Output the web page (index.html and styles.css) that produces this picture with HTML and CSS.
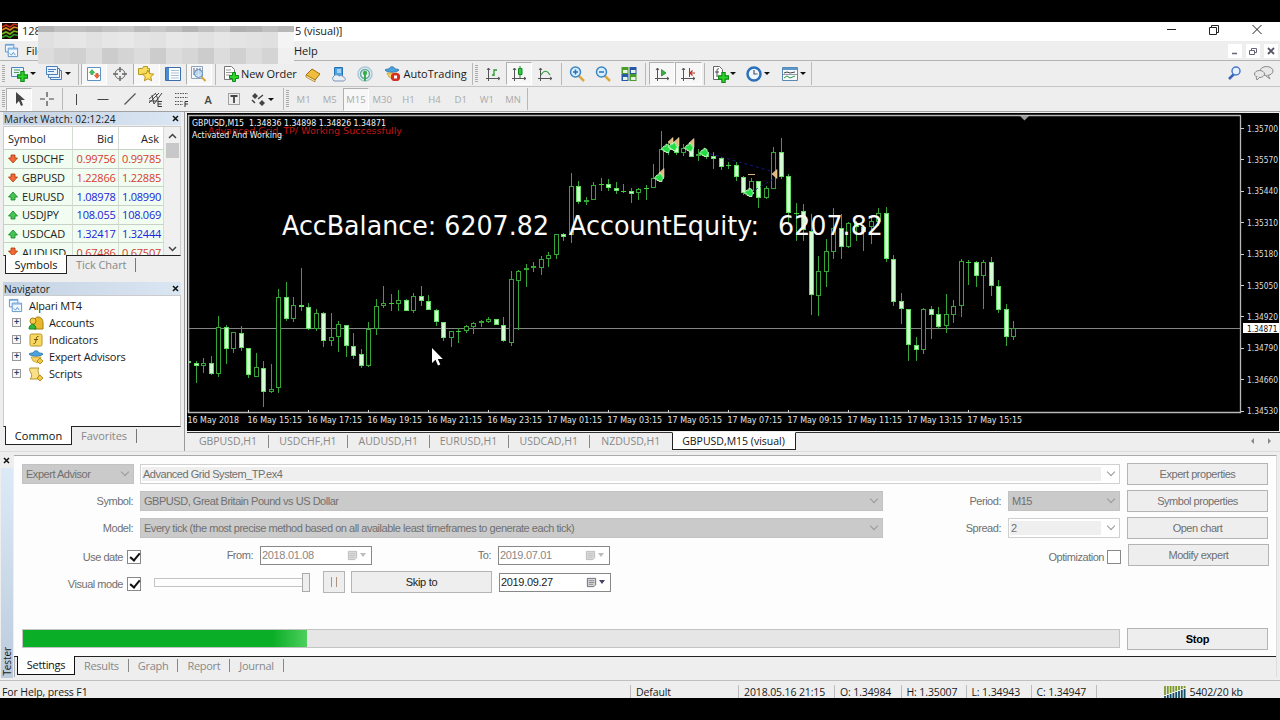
FILE: index.html
```html
<!DOCTYPE html>
<html lang="en">
<head>
<meta charset="utf-8">
<title>MT4 Strategy Tester</title>
<link rel="stylesheet" href="styles.css">
</head>
<body>
<svg width="0" height="0" class="defs">
  <symbol id="plus" viewBox="0 0 10 10"><path d="M3.5.5h3v3h3v3h-3v3h-3v-3h-3v-3h3z" fill="#2ed32e" stroke="#0c8a12"/></symbol>
  <symbol id="axes" viewBox="0 0 18 18"><path d="M4.500 3v13M2 13.500h14M3 5l1.500-2L6 5M14 12l2 1.500L14 15" fill="none" stroke="#555"/></symbol>
  <symbol id="windows" viewBox="0 0 16 16"><g fill="#eef6ff" stroke="#5c93c8"><path d="M1.500 1.500h9v8h-9z"/><path d="M4.500 5.500h10v9h-10z"/></g><path d="M2 2.500h8M5 6.500h9" stroke="#7db2e4"/><path d="M6 11l2 2 2-3 2 3" fill="none" stroke="#5c93c8"/></symbol>
  <symbol id="hat" viewBox="0 0 16 16"><path d="M1 5c2 3 12 3 14 0-1-1-3-1-4-1-1-3-5-3-6 0-1 0-3 0-4 1z" fill="#4aa3dc" stroke="#2570a8" stroke-width=".8"/><path d="M3 8h10l-3 6-5-2z" fill="#f3d26a" stroke="#c89a2a" stroke-width=".8"/></symbol>
  <symbol id="down" viewBox="0 0 10 10"><path d="M3 1h4v3h2.500L5 9 .5 4H3z" fill="#f0693a" stroke="#b03408" stroke-width=".8"/></symbol>
  <symbol id="up" viewBox="0 0 10 10"><path d="M3 9h4V6h2.500L5 1 .5 6H3z" fill="#45c653" stroke="#148022" stroke-width=".8"/></symbol>
  <symbol id="cal" viewBox="0 0 12 12"><path d="M1.500 1.500h9v7l-2 2h-7z" fill="#d8d8d8" stroke="currentColor"/><path d="M3 4h6M3 6h6M3 8h5" stroke="currentColor" stroke-width=".7"/></symbol>
</svg>
<div class="screen">
  <header class="titlebar">
    <svg class="logo" width="16" height="16" viewBox="0 0 16 16"><path d="M0 0h16v16H0z" fill="#180c04"/><g fill="none" stroke-width="1.600"><path d="M0 4l4-2 4 2 4-3 4 1" stroke="#c92a18"/><path d="M0 7l4-2 4 2 4-3 4 1" stroke="#d88a20"/><path d="M0 11l4-2 4 2 4-3 4 1" stroke="#7ab51e"/><path d="M0 14.500l4-2 4 2 4-3 4 1" stroke="#2e9a22"/></g></svg>
    <span class="title-a">128</span><span class="title-b">5 (visual)]</span>
    <svg class="winbtns" width="100" height="18" viewBox="0 0 100 18" fill="none" stroke="#222"><path d="M1 7.500h9"/><path d="M43.500 5.500h7v7h-7zM45.500 5.500v-2h7v7h-2"/><path d="M86.500 3l9 9M95.500 3l-9 9"/></svg>
  </header>
  <nav class="menubar">
    <svg width="15" height="15"><use href="#windows"/></svg>
    <span class="menu-file">File</span><span class="menu-help">Help</span>
    <div class="mdi"><i><svg width="10" height="10"><path d="M2 7.500h5" stroke="#667" stroke-width="1.500"/></svg></i><i><svg width="10" height="10" fill="none" stroke="#667"><path d="M1.500 4.500h5v4h-5zM3.500 4V2.500h5v4H7"/></svg></i><i><svg width="10" height="10"><path d="M2 2l6 6M8 2l-6 6" stroke="#556" stroke-width="1.800"/></svg></i></div>
  </nav>
  <div class="mosaic" id="mosaic"></div>

  <div class="toolbar main-tools">
    <b class="grip"></b>
    <span class="tb dd w34"><svg width="20" height="18"><path d="M2.500 2.500h12v9h-12z" fill="#e8f3ff" stroke="#4a86c0"/><path d="M5 5h6M5 7.500h5" stroke="#4c9c50"/><use href="#plus" x="8" y="6" width="11" height="11"/></svg><em></em></span>
    <span class="tb dd w36 prof"><svg width="18" height="18" fill="#e8f3ff" stroke="#4a80ba"><path d="M5.500 5.500h11v9h-11z"/><path d="M3.500 3.500h11v9h-11z"/><path d="M1.500 1.500h11v8h-11z"/><path d="M3 4.500h8M3 6.500h6"/></svg><em></em></span>
    <b class="sep s5"></b>
    <span class="tb on"><svg width="16" height="16"><path d="M1.500 1.500h13v13h-13z" fill="#fff" stroke="#5c93c8"/><use href="#up" x="3" y="3" width="6" height="6"/><use href="#down" x="8" y="7" width="6" height="6"/></svg></span>
    <span class="tb"><svg width="16" height="16" fill="none" stroke="#666"><circle cx="8" cy="8" r="5"/><path d="M8 1v5M8 10v5M1 8h5M10 8h5" stroke-width="1.500"/></svg></span>
    <span class="tb on"><svg width="18" height="18"><path d="M1.500 3.500h4l1-2h4v2h2v6h-11z" fill="#f6dc5e" stroke="#b99722"/><path d="M11 5l1.700 3.700 4 .4-3 2.700.9 4L11 13.700l-3.600 2.100.9-4-3-2.700 4-.4z" fill="#ffe25a" stroke="#b9901a"/></svg></span>
    <span class="tb"><svg width="16" height="16"><path d="M.5 1.500h15v13H.5z" fill="#fff" stroke="#3b6ea8"/><path d="M1 2h3v12H1z" fill="#4b8cd0"/><path d="M6 4.500h8M6 7h8M6 9.500h8M6 12h8" stroke="#a9bfd8"/></svg></span>
    <span class="tb on"><svg width="17" height="17"><path d="M1.500 1.500h11v12h-11z" fill="#f4f8fc" stroke="#8aa4be"/><path d="M4 3v7M7 3v7M10 3v6" stroke="#668"/><circle cx="8.500" cy="8.500" r="4" fill="#bfe0f8" fill-opacity=".7" stroke="#5a8ab8"/><path d="M11.500 12l4 4" stroke="#d8a838" stroke-width="2"/></svg></span>
    <b class="sep s8"></b>
    <span class="tb order"><svg width="18" height="18"><path d="M1.500 1.500h7l3 3v10h-10z" fill="#fff" stroke="#777"/><path d="M3 5h5M3 7.500h6M3 10h4" stroke="#999"/><use href="#plus" x="6" y="7" width="10" height="10"/></svg>New Order</span>
    <span class="tb"><svg width="16" height="16"><path d="M1 9l6-6 8 5-5 6z" fill="#eebd3e" stroke="#a06c10"/><path d="M1 9v2l9 5v-2z" fill="#fff0b8" stroke="#a06c10" stroke-width=".7"/></svg></span>
    <span class="tb"><svg width="16" height="16"><path d="M3.500 1.500h8v8h-8z" fill="#4da2e4" stroke="#2570b0"/><path d="M6 4h4M6 6h4" stroke="#fff"/><path d="M3 15a3 3 0 010-5c2-2 4-1 5 0 2-1 4 0 4 1 3 0 3 4 0 4z" fill="#e6eef6" stroke="#7c95b4"/></svg></span>
    <span class="tb"><svg width="16" height="16" fill="none"><circle cx="8" cy="8" r="7" stroke="#a8c8d8" stroke-width="1.500"/><circle cx="8" cy="8" r="4.500" stroke="#64a8a8" stroke-width="1.500"/><circle cx="8" cy="7" r="2.200" fill="#35b04a"/><path d="M8 8v7" stroke="#35b04a" stroke-width="2"/></svg></span>
    <span class="tb auto"><svg width="17" height="17"><use href="#hat" width="16" height="16"/><path d="M9 8h5l2 2v4l-2 2H9l-2-2v-4z" fill="#d83020"/><path d="M10 10.500h3v3h-3z" fill="#fff"/></svg>AutoTrading</span>
    <b class="sep s3"></b><b class="grip g2"></b>
    <span class="tb"><svg width="18" height="18"><use href="#axes"/><path d="M8 10h2V5h3M10 5v6" stroke="#269a30" fill="none" stroke-width="1.300"/></svg></span>
    <span class="tb on"><svg width="18" height="18"><use href="#axes"/><path d="M10 1v12" stroke="#148a20"/><path d="M8.500 3.500h3.500v6H8.500z" fill="#38c848" stroke="#148a20"/></svg></span>
    <span class="tb"><svg width="18" height="18"><use href="#axes"/><path d="M5 10c3-5 6-5 9 0" fill="none" stroke="#3a9a44" stroke-width="1.200"/></svg></span>
    <b class="sep s5"></b>
    <span class="tb"><svg width="18" height="18"><path d="M10 10l6 6" stroke="#d8aa40" stroke-width="2.500"/><circle cx="7.500" cy="7" r="5" fill="#d8efff" stroke="#3b86c4" stroke-width="1.500"/><path d="M5 7h5M7.500 4.500v5" stroke="#2870b8" stroke-width="1.500"/></svg></span>
    <span class="tb"><svg width="18" height="18"><path d="M10 10l6 6" stroke="#d8aa40" stroke-width="2.500"/><circle cx="7.500" cy="7" r="5" fill="#d8efff" stroke="#3b86c4" stroke-width="1.500"/><path d="M5 7h5" stroke="#2870b8" stroke-width="1.500"/></svg></span>
    <span class="tb"><svg width="16" height="16"><path d="M.5 1h7v7h-7zM8.500 8h7v7h-7z" fill="#4a9c28"/><path d="M8.500 1h7v7h-7zM.5 8h7v7h-7z" fill="#2858a8"/><path d="M2 4h4.500v3H2zM10 4h4.500v3H10zM2 11h4.500v3H2zM10 11h4.500v3H10z" fill="#e6f2e6"/></svg></span>
    <b class="sep s7"></b>
    <span class="tb on"><svg width="18" height="18"><use href="#axes"/><path d="M8.500 4.500l4.500 3.500-4.500 3z" fill="#38b048" stroke="#187c24" stroke-width=".7"/></svg></span>
    <span class="tb on"><svg width="18" height="18"><use href="#axes"/><path d="M10.500 3v9" stroke="#555"/><path d="M11 8h5M13.500 5.500L11 8l2.500 2.500" stroke="#b83018" fill="none" stroke-width="1.200"/></svg></span>
    <b class="sep s6"></b>
    <span class="tb dd w34"><svg width="18" height="18"><path d="M2.500 1.500h6l3 3v10h-9z" fill="#fff" stroke="#666"/><path d="M8 4c-2-1-2 1-2 3v5M4 7h4" stroke="#444" fill="none"/><use href="#plus" x="7" y="7" width="11" height="11"/></svg><em></em></span>
    <span class="tb dd w36"><svg width="18" height="18"><circle cx="9" cy="9" r="6.500" fill="#eef6ff" stroke="#2b70b8" stroke-width="2.500"/><path d="M9 5v4h3.500" fill="none" stroke="#555" stroke-width="1.200"/></svg><em></em></span>
    <span class="tb dd w34 last"><svg width="18" height="18"><path d="M1.500 2.500h15v13h-15z" fill="#f6faff" stroke="#5a88b4"/><path d="M2 4h14" stroke="#5c98d0" stroke-width="2"/><path d="M3 8l3-1 3 1 5-1" stroke="#444" fill="none"/><path d="M2 9.500h14" stroke="#99a"/><path d="M3 13l3-2 3 2 5-2" stroke="#2c9c44" fill="none"/></svg><em></em></span>
    <svg class="right-tools" width="50" height="20"><path d="M4 15l5-5" stroke="#3a62b8" stroke-width="2.500"/><circle cx="11" cy="7" r="4" fill="#e8f1ff" stroke="#4a78cc" stroke-width="1.500"/><g fill="#e8e8e8" stroke="#888"><ellipse cx="41.500" cy="7" rx="6.500" ry="4.500"/><path d="M43 11l2 4-4-3"/><ellipse cx="34.500" cy="10" rx="5" ry="3.500"/><path d="M31 13l1 3 3-3"/></g></svg>
  </div>

  <div class="toolbar draw-tools">
    <b class="grip"></b>
    <span class="tb on"><svg width="16" height="16"><path d="M5 1v12l3-3 2 5 2-1-2-5h4z" fill="#444"/></svg></span>
    <span class="tb w29"><svg width="16" height="16" stroke="#444" stroke-width="1.200"><path d="M8 1v5M8 10v5M1 8h5M10 8h5"/></svg></span>
    <b class="sep s3"></b>
    <span class="tb"><svg width="16" height="16"><path d="M7.500 3v11" stroke="#444"/></svg></span>
    <span class="tb"><svg width="16" height="16"><path d="M2.500 8.500h11" stroke="#444"/></svg></span>
    <span class="tb"><svg width="16" height="16"><path d="M2.500 13.500L13.500 2.500" stroke="#555" stroke-width="1.200"/></svg></span>
    <span class="tb"><svg width="16" height="16"><path d="M1 12L11 2M1 8l7-6M6 13l8-11M4 4l2 9M8 3l2 6M1 10h10" stroke="#444"/><path d="M14 10.500h-4v5h4M10 13h3.500" fill="none" stroke="#333"/></svg></span>
    <span class="tb"><svg width="16" height="16"><path d="M1 2.500h13M1 6.500h13M1 10.500h8M1 13.500h8" stroke="#555" stroke-dasharray="1.500 1"/><path d="M14 10.500h-3V16M11 13h3" fill="none" stroke="#333"/></svg></span>
    <span class="tb ltr">A</span>
    <span class="tb"><svg width="16" height="16"><path d="M2.500 2.500h11v11h-11z" fill="none" stroke="#555" stroke-dasharray="1 1"/><path d="M4.500 5h7M8 5v7" stroke="#444" stroke-width="1.800"/></svg></span>
    <span class="tb dd w34 arr"><svg width="17" height="16"><path d="M2 5l3-3 3 3-3 3zM9 12l3-3 3 3-3 3z" fill="#444"/><path d="M2 9l3 3M8 8l5-4" stroke="#444" stroke-width="1.500"/></svg><em></em></span>
    <b class="sep s3"></b><b class="grip g2"></b>
    <span class="tf">M1</span><span class="tf">M5</span><span class="tf on">M15</span><span class="tf">M30</span><span class="tf">H1</span><span class="tf">H4</span><span class="tf">D1</span><span class="tf">W1</span><span class="tf">MN</span>
    <b class="sep s3"></b>
  </div>

  <main class="workspace">
    <aside class="side">
      <section class="watch">
        <h2 class="ptitle"><span>Market Watch: 02:12:24</span><svg width="7" height="7"><path d="M1 1l5 5M6 1L1 6" stroke="#111" stroke-width="1.500"/></svg></h2>
        <div class="watch-body">
          <div class="quotes">
            <div class="q head"><span>Symbol</span><span>Bid</span><span>Ask</span></div>
            <div class="q dn"><span><svg width="10" height="10"><use href="#down"/></svg>USDCHF</span><span>0.99756</span><span>0.99785</span></div>
            <div class="q dn"><span><svg width="10" height="10"><use href="#down"/></svg>GBPUSD</span><span>1.22866</span><span>1.22885</span></div>
            <div class="q"><span><svg width="10" height="10"><use href="#up"/></svg>EURUSD</span><span>1.08978</span><span>1.08990</span></div>
            <div class="q"><span><svg width="10" height="10"><use href="#up"/></svg>USDJPY</span><span>108.055</span><span>108.069</span></div>
            <div class="q"><span><svg width="10" height="10"><use href="#up"/></svg>USDCAD</span><span>1.32417</span><span>1.32444</span></div>
            <div class="q dn"><span><svg width="10" height="10"><use href="#down"/></svg>AUDUSD</span><span>0.67486</span><span>0.67507</span></div>
          </div>
          <div class="scroll"><svg width="9" height="6"><path d="M1 5l3.500-3.500L8 5" fill="none" stroke="#444" stroke-width="1.500"/></svg><i></i><svg width="9" height="6"><path d="M1 1l3.500 3.500L8 1" fill="none" stroke="#444" stroke-width="1.500"/></svg></div>
        </div>
        <div class="ptabs"><b class="t-sym">Symbols</b><span>Tick Chart</span></div>
      </section>
      <section class="navig">
        <h2 class="ptitle"><span>Navigator</span><svg width="7" height="7"><path d="M1 1l5 5M6 1L1 6" stroke="#111" stroke-width="1.500"/></svg></h2>
        <div class="tree">
          <div class="root"><svg width="15" height="15"><use href="#windows"/></svg>Alpari MT4</div>
          <div class="node"><i>+</i><svg width="16" height="16"><path d="M6 8c0-3 1-6 4-6s5 2 5 6v6H6z" fill="#e8b82c" stroke="#a87c10"/><circle cx="5" cy="6" r="3" fill="#f4cc48" stroke="#a87c10"/><path d="M1 14c0-6 7-6 7 0z" fill="#32b83c" stroke="#188420"/></svg>Accounts</div>
          <div class="node"><i>+</i><svg width="16" height="16"><rect x="2" y="2" width="12" height="12" rx="1.500" fill="#f6d860" stroke="#b8922c"/><path d="M10.500 4.500c-2-.5-2 1-2.500 3.500s-.5 4-2.500 3.500M6 7.500h4" fill="none" stroke="#705010"/></svg>Indicators</div>
          <div class="node"><i>+</i><svg width="16" height="16"><use href="#hat"/><path d="M12 9l3 3-3 3-3-3z" fill="#f2c840" stroke="#a87c10" stroke-width=".8"/></svg>Expert Advisors</div>
          <div class="node"><i>+</i><svg width="16" height="16"><path d="M2 2h9c-2 2 0 5 0 8 0 2-1 3-2 3H2c2-2 2-4 1-6S1 4 2 2z" fill="#f9e088" stroke="#b8922c"/><path d="M12 9l3 3-3 3-3-3z" fill="#f2c840" stroke="#a87c10" stroke-width=".8"/></svg>Scripts</div>
        </div>
        <div class="ptabs"><b class="t-com">Common</b><span>Favorites</span></div>
      </section>
    </aside>
    <section class="chart-area">
      <svg id="chart" class="chart" width="1092" height="318" viewBox="187 113 1092 318"></svg>
      <div class="chart-tabs"><span class="c80">GBPUSD,H1</span><span class="c79">USDCHF,H1</span><span class="c82">AUDUSD,H1</span><span class="c79">EURUSD,H1</span><span class="c82">USDCAD,H1</span><span class="c82 nb">NZDUSD,H1</span><b>GBPUSD,M15 (visual)</b><svg width="30" height="10"><path d="M6 2v6L3 5zM20 2v6l3-3z" fill="#888"/></svg></div>
    </section>
  </main>

  <section class="tester">
    <div class="strip"><svg width="7" height="7"><path d="M1 1l5 5M6 1L1 6" stroke="#111" stroke-width="1.500"/></svg><div><span>Tester</span></div></div>
    <div class="tpanel">
      <div class="form">
        <div class="row"><div class="combo dark c-ea">Expert Advisor<u></u></div><div class="combo edit c-file">Advanced Grid System_TP.ex4<u></u></div><div class="btn">Expert properties</div></div>
        <div class="row"><label class="l118">Symbol:</label><div class="combo dark c-wide">GBPUSD, Great Britain Pound vs US Dollar<u></u></div><label class="l118">Period:</label><div class="combo dark c-small">M15<u></u></div><div class="btn">Symbol properties</div></div>
        <div class="row"><label class="l118">Model:</label><div class="combo dark c-wide">Every tick (the most precise method based on all available least timeframes to generate each tick)<u></u></div><label class="l118">Spread:</label><div class="combo edit c-small">2<u></u></div><div class="btn">Open chart</div></div>
        <div class="row"><label class="l109 low">Use date</label><div class="check low on"></div><label class="l112">From:</label><div class="date">2018.01.08<svg width="11" height="11"><use href="#cal"/></svg><em></em></div><label class="l119">To:</label><div class="date">2019.07.01<svg width="11" height="11"><use href="#cal"/></svg><em></em></div><label class="opt low">Optimization</label><div class="check low"></div><div class="btn">Modify expert</div></div>
        <div class="row"><label class="l109 low">Visual mode</label><div class="check low on"></div><div class="slider"><i></i></div><div class="btn pause"><i></i></div><div class="btn skip">Skip to</div><div class="date live">2019.09.27<svg width="11" height="11"><use href="#cal"/></svg><em></em></div></div>
        <div class="row progress-row"><div class="progress"><i></i></div><div class="btn stop">Stop</div></div>
      </div>
      <div class="ttabs"><b>Settings</b><span>Results</span><span>Graph</span><span>Report</span><span>Journal</span></div>
    </div>
  </section>
  <footer class="status"><span class="s0">For Help, press F1</span><span class="s1">Default</span><span class="s2">2018.05.16 21:15</span><span class="s3">O: 1.34984</span><span class="s4">H: 1.35007</span><span class="s4">L: 1.34943</span><span class="s4">C: 1.34947</span><span class="s5"><svg width="23" height="14" id="net"></svg>5402/20 kb</span></footer>
</div>
<script src="chart.js"></script>
</body>
</html>
```
FILE: styles.css
```css
* { box-sizing: border-box; }
body { margin: 0; background: #000; font: 11px "Open Sans", "Noto Sans", sans-serif; color: #1a1a1a; }
.defs { position: absolute; }
.screen { position: relative; width: 1280px; height: 676px; margin-top: 22px; background: #eee; overflow: hidden; display: flex; flex-direction: column; }
svg { display: block; flex: none; }
i, em { font-style: normal; }
span, b, label, .btn, .combo { white-space: nowrap; }

.titlebar { height: 19px; background: #fff; display: flex; align-items: center; padding-bottom: 2px; }
.logo { margin-left: 2px; }
.title-a { margin-left: 4px; width: 273px; }
.winbtns { margin-left: auto; margin-right: 14px; }
.title-b { letter-spacing: -.1px; }
.menubar { height: 20px; display: flex; align-items: center; padding-left: 4px; border-bottom: 1px solid #b4b4b4; }
.menu-file { margin-left: 7px; width: 268px; }
.mdi { margin-left: auto; display: flex; gap: 4px; margin-right: 2px; }
.mdi i { width: 14px; height: 14px; background: #fff; display: flex; justify-content: center; align-items: center; }
.mosaic { position: absolute; left: 38px; top: 4px; width: 256px; height: 38px; display: grid; grid-template-columns: repeat(16, 16px); grid-template-rows: 6px 16px 16px; }

.toolbar { display: flex; align-items: center; }
.main-tools { height: 26px; border-bottom: 1px solid #c4c4c4; }
.draw-tools { height: 24px; }
.grip { width: 3px; height: 18px; margin: 0 1px 0 2px; background: repeating-linear-gradient(#aaa 0 1px, #eee 1px 2px); }
.g2 { margin: 0 2px 0 1px; }
.sep { height: 22px; background: linear-gradient(#b8b8b8, #b8b8b8) center / 1px 100% no-repeat; }
.s3 { width: 3px; } .s5 { width: 5px; } .s6 { width: 6px; } .s7 { width: 7px; } .s8 { width: 8px; }
.tb { width: 26.200px; height: 23px; display: flex; align-items: center; justify-content: center; flex: none; }
.tb.on, .tf.on { background: #f7f7f7; border: 1px solid #fff; border-top-color: #b0b0b0; border-left-color: #b0b0b0; }
.tb.w34 { width: 34px; } .tb.w36 { width: 36px; } .tb.w29 { width: 29px; }
.dd { justify-content: flex-start; padding-left: 3px; }
.dd em { border: 3px solid transparent; border-top-color: #111; border-bottom: 0; margin-left: 1px; }
.dd.prof { padding-left: 5px; }
.dd.prof em { margin-left: 2px; }
.dd.arr { padding-left: 2px; }
.order { width: 80px; justify-content: flex-start; padding-left: 3px; letter-spacing: -.05px; }
.auto { width: 92.500px; justify-content: flex-start; padding-left: 5px; gap: 3px; }
.last { border-right: 1px solid #bbb; }
.right-tools { margin-left: auto; margin-right: 5px; }
.ltr { font-weight: 600; color: #444; }
.tf { width: 26.200px; height: 23px; display: flex; align-items: center; justify-content: center; color: #aaa; font-size: 9.500px; }

.workspace { height: 340px; display: flex; border-top: 1px solid #a0a0a0; }
.side { width: 185px; padding: 0 3px 0 3px; border-right: 1px solid #999; }
.watch { height: 170px; }
.ptitle { margin: 0; height: 13px; padding: 0 2px 0 1px; display: flex; align-items: center; justify-content: space-between; font: 10px "Open Sans", sans-serif; background: linear-gradient(90deg, #c4d2e2, #dbe6f3); letter-spacing: .08px; }
.watch-body { height: 130px; display: flex; background: #fff; border: 1px solid #ccc; border-bottom: 1px solid #222; margin-top: 1px; overflow: hidden; }
.quotes { width: 160px; flex: none; }
.q { height: 18.700px; display: grid; grid-template-columns: 69px 45.500px 45.500px; background: #f0fdf0; color: #2222dd; }
.q span { border-right: 1px solid #d4dcd4; border-bottom: 1px solid #c8d0c8; display: flex; align-items: center; justify-content: flex-end; padding-right: 2px; letter-spacing: -.25px; }
.q span:first-child { justify-content: flex-start; color: #222; padding-left: 4px; gap: 4px; letter-spacing: -.15px; }
.q.dn { color: #d83a30; }
.q.head { height: 23px; background: #fff; color: #222; }
.q.head span { padding-right: 4px; letter-spacing: 0; }
.scroll { flex: 1; background: #f0f0f0; display: flex; flex-direction: column; align-items: center; padding: 6px 0 3px; }
.scroll i { width: 13px; height: 15px; background: #c8c8c8; margin: 4px 0 auto; }
.ptabs { height: 19px; display: flex; color: #888; }
.ptabs b { background: #fff; color: #111; font-weight: 400; border: solid #222; border-width: 0 1px 1px 1px; margin-left: 2px; display: flex; align-items: center; justify-content: center; margin-top: -1px; height: 19px; position: relative; }
.t-sym { width: 62px; } .t-com { width: 67px; }
.ptabs span { height: 14px; margin: 2px 0; padding: 0 9px; border-right: 1px solid #777; line-height: 13px; letter-spacing: -.05px; }
.tree { background: #fff; border: 1px solid #ccc; border-bottom-color: #222; height: 132px; padding: 1px 4px; }
.root, .node { display: flex; align-items: center; height: 17px; gap: 6px; letter-spacing: -.2px; }
.node { padding-left: 4px; gap: 5px; }
.node i { width: 9px; height: 9px; border: 1px solid #999; color: #246; font: bold 9px/7px "Liberation Sans", sans-serif; text-align: center; margin-right: 2px; background: #f4f6fa; }

.chart-area { flex: 1; padding-left: 2px; display: flex; flex-direction: column; }
.chart { background: #000; margin-top: 1px; }
.chart-tabs { height: 20px; margin-top: 1px; border-top: 1px solid #333; display: flex; color: #888; align-items: flex-start; }
.chart-tabs span { height: 13px; line-height: 13px; margin-top: 2px; border-right: 1px solid #888; text-align: center; font-size: 10.500px; }
.c80 { width: 82px; padding-left: 1px; } .c79 { width: 79px; } .c82 { width: 81.500px; }
.chart-tabs .nb { border: 0; }
.chart-tabs b { margin-top: -1px; height: 18px; width: 124px; background: #fff; border: 1px solid #222; border-top-color: #fff; color: #111; font-weight: 400; font-size: 10.500px; line-height: 16px; text-align: center; }
.chart-tabs svg { margin: 3px 2px 0 auto; }

.tester { height: 230px; display: flex; border-bottom: 1px solid #c0c0c0; border-top: 1px solid #ddd; }
.strip { width: 14px; padding: 5px 1px 2px 0; display: flex; flex-direction: column; align-items: center; gap: 4px; }
.strip div { width: 12px; flex: 1; background: linear-gradient(#dceaf8, #bccbdc); display: flex; align-items: flex-end; padding-bottom: 2px; }
.strip span { writing-mode: vertical-rl; transform: rotate(180deg); font-size: 10px; line-height: 12px; letter-spacing: -.1px; }
.tpanel { width: 1263px; margin-top: 3px; border: 1px solid #aaa; border-bottom: 0; border-right-color: #ddd; height: 222px; }
.form { height: 201px; background: #fdfdfd; padding-top: 4px; font: 11px "Liberation Sans", Arial, sans-serif; letter-spacing: -.47px; color: #707070; border-bottom: 1px solid #222; margin-left: -1px; }
.row { height: 27.200px; display: flex; align-items: center; }
.row label { text-align: right; margin-right: 7px; }
.l118 { width: 119px; } .l109 { width: 109px; } .row .l109 { margin-right: 4px; } .l112 { width: 112px; } .l119 { width: 119px; } .opt { width: 494px; }
.row .opt { margin-right: 3px; }
.low { position: relative; top: 2px; }
.combo { height: 20px; border: 1px solid #bbb; display: flex; align-items: center; padding-left: 3px; }
.combo u { width: 6px; height: 6px; border: solid #999; border-width: 0 1px 1px 0; transform: rotate(45deg); margin: -3px 5px 0 auto; }
.combo.dark { background: #cacaca; border-color: #c2c2c2; }
.combo.edit { background: linear-gradient(#efefef, #efefef) 1px 2px / calc(100% - 19px) 14px no-repeat #fff; border-color: #d0d0d0; padding-left: 2px; }
.c-ea { width: 112px; margin: 0 6px 0 8px; } .c-file { width: 980px; } .c-wide { width: 743px; } .row .c-wide + label { width: 118px; } .row .c-small { width: 112px; }
.btn { width: 141px; height: 22px; margin-left: 7px; border: 1px solid #b4b4b4; background: #eee; display: flex; align-items: center; justify-content: center; }
.check { width: 14px; height: 14px; border: 1px solid #888; background: #fff; }
.check.on::after { content: ""; display: block; width: 4px; height: 8px; margin: 0 0 0 4px; border: solid #111; border-width: 0 2px 2px 0; transform: rotate(40deg); }
.date { width: 112px; height: 19px; border: 1px solid #888; background: #fff; display: flex; align-items: center; padding: 0 5px 0 1px; color: #888; letter-spacing: -.33px; }
.date svg { margin-left: auto; color: #bbb; }
.date em { border: 3px solid transparent; border-top: 4px solid #bbb; border-bottom: 0; margin-left: 2px; }
.date.live { color: #222; margin-left: 7px; }
.live svg { color: #667; } .live em { border-top-color: #446; }
.slider { width: 156px; margin-left: 13px; height: 20px; display: flex; align-items: center; background: linear-gradient(#c4c4c4, #c4c4c4) 0 6px / 100% 1px no-repeat, linear-gradient(#c4c4c4, #c4c4c4) 0 14px / 100% 1px no-repeat, linear-gradient(#c4c4c4, #c4c4c4) 0 6px / 1px 9px no-repeat; }
.slider i { width: 8px; height: 19px; border: 1px solid #aaa; background: #eee; margin-left: auto; }
.btn.pause { width: 22px; margin-left: 13px; }
.pause i { width: 6px; height: 10px; border: solid #aa9480; border-width: 0 1.500px; }
.btn.skip { width: 141px; margin-left: 6px; color: #222; letter-spacing: -.3px; }
.progress-row { margin-top: 29px; }
.progress { margin-left: 8px; width: 1098px; height: 19px; background: #e6e6e6; border: 1px solid #c4c4c4; }
.progress i { display: block; width: 284px; height: 17px; background: linear-gradient(90deg, #0bae27 88%, #4dcf5e); }
.stop { color: #000; font-weight: 700; letter-spacing: -.2px; }
.ttabs { display: flex; color: #888; height: 20px; letter-spacing: -.3px; }
.ttabs b { width: 58px; height: 19px; margin: -1px 0 0 2px; position: relative; background: #fff; color: #111; border: solid #111; border-width: 0 1px 1px 1px; font-weight: 400; text-align: center; line-height: 18px; }
.ttabs span { height: 13px; line-height: 13px; margin-top: 2px; padding: 0 9px; border-right: 1px solid #888; }
.status { height: 17px; display: flex; font-size: 10.500px; line-height: 15px; padding-top: 4px; letter-spacing: -.12px; }
.status span { border-right: 1px solid #bbb; padding-left: 5px; height: 13px; }
.status .s0 { width: 631px; padding-left: 2px; } .s1 { width: 108px; } .s2 { width: 96px; }
.status .s3 { width: 66.500px; } .s4 { width: 65px; }
.status .s5 { border: 0; padding-left: 67px; display: flex; gap: 3px; }
```
FILE: chart.js
```js
// Each candle: [high, body top, body bottom, low, filled]
const candles = [
[336,361,363,367,1],[361,363,366,383,1],[358,363,366,373,0],[356,363,374,375,1],[316,327,374,377,0],[325,327,349,364,1],[332,332,349,353,0],[326,333,348,351,1],[348,348,375,378,1],[353,367,377,377,0],
[361,368,392,407,1],[364,389,392,393,0],[289,297,388,393,0],[282,297,319,321,1],[297,305,319,322,0],[268,305,307,311,1],[303,307,329,330,1],[309,313,329,331,0],[312,313,341,347,1],[313,337,341,346,0],
[321,324,337,352,0],[325,325,346,357,1],[333,346,356,359,1],[349,354,366,368,1],[322,329,366,367,0],[299,306,329,335,0],[286,303,306,308,0],[294,303,303,311,0],[290,300,304,311,0],[299,300,311,311,1],
[293,296,311,313,0],[286,296,301,306,1],[295,301,310,310,1],[309,310,322,326,1],[322,322,338,341,1],[331,331,338,347,0],[328,331,331,343,0],[325,326,331,333,0],[322,323,327,334,0],[320,321,323,327,0],
[317,319,322,323,0],[319,319,325,325,1],[317,325,341,342,1],[271,279,343,346,0],[270,271,281,330,0],[264,268,270,287,0],[262,266,268,272,0],[256,259,268,275,0],[252,255,259,267,0],[234,234,255,259,0],
[233,234,237,241,1],[173,186,235,243,0],[181,186,202,204,1],[197,200,202,205,0],[182,185,200,200,0],[178,184,184,191,0],[179,184,188,191,1],[182,188,191,194,1],[184,191,191,193,0],[188,191,194,203,1],
[188,189,193,200,0],[185,188,188,200,0],[164,178,188,188,0],[131,149,178,180,0],[143,146,149,155,0],[144,145,153,155,1],[144,148,153,156,0],[146,147,157,157,1],[149,154,156,161,0],[151,154,157,159,1],
[152,156,159,169,1],[157,158,167,170,1],[162,165,165,169,0],[162,165,177,181,1],[176,177,193,195,1],[178,181,191,194,0],[181,181,198,208,1],[186,188,198,199,0],[147,152,189,189,0],[138,152,177,179,1],
[174,176,213,223,1],[203,213,213,241,0],[204,211,230,241,1],[214,231,295,315,1],[256,271,296,316,0],[239,251,272,287,0],[208,228,252,259,0],[214,228,247,259,1],[222,223,247,248,0],[221,223,227,241,1],
[226,227,232,251,1],[217,221,227,244,0],[208,213,222,226,0],[207,213,259,262,1],[255,259,302,306,1],[293,301,309,324,1],[309,309,345,361,1],[337,345,350,361,1],[308,309,350,354,0],[306,309,315,339,1],
[307,314,327,329,1],[294,314,326,333,0],[300,306,315,323,0],[259,261,306,317,0],[260,262,262,285,0],[261,262,276,287,1],[260,262,276,309,0],[257,262,286,296,1],[280,286,310,313,1],[304,309,337,346,1],[321,328,337,340,0]];
const line = '#b8b8b8';
let s = `<path d="M188.500 412.500V115.500H1241M1240.500 115v298M188 412.500h1053" fill="none" stroke="${line}" stroke-width="1.300"/>`;
s += '<path d="M189 328.500h1051" stroke="#858585"/>';
candles.forEach((c, i) => {
  const x = Math.floor(188.6 + i * 7.5) + .5, [h, t, b, l, f] = c;
  s += `<path d="M${x} ${h}V${t}M${x} ${b}V${l}" stroke="#35a535"/>`;
  if (t === b) s += `<path d="M${x - 2.5} ${t + .5}h5M${x} ${t}v1" stroke="#40d040"/>`;
  else s += `<rect x="${x - 2}" y="${t + .5}" width="4" height="${Math.max(b - t - 1, 1)}" fill="${f ? '#d2fbd2' : '#000'}" stroke="${f ? '#62df62' : '#35a535'}"/>`;
});
s += '<path d="M187 330h1v80h-1z" fill="#000"/><path d="M188.500 115v298" stroke="#b8b8b8" stroke-width="1.300"/>';
s += '<path d="M704 152L774 172M750 193L775 178" stroke="#181888" stroke-dasharray="3 3"/>';
const diamond = (x, y) => `<path d="M${x - 4.5} ${y + 1}l2.500-3h2v-2l3 1.500v2l2 1.500-2 1.500v2h-3v-1h-2v-1.500h-2z" fill="#22dd44" stroke="#c4f8c4" stroke-width=".9"/>`;
const tri = (x, y) => `<path d="M${x - 3} ${y}l5-4.500v9z" fill="#e2b878" stroke="#f4dcae" stroke-width=".6"/>`;
[[662, 173], [671, 142], [677, 142], [692, 143], [775, 174]].forEach(p => s += tri(...p));
[[659, 177], [666, 148], [673, 146], [689, 147], [704, 152], [749, 192]].forEach(p => s += diamond(...p));
s += '<path d="M748 174.500h7" stroke="#e2b878"/><path d="M1020 116h9l-4.500 4.500z" fill="#999"/>';
const text = (x, y, w, str, size, fill, fam) => `<text x="${x}" y="${y}" textLength="${w}" lengthAdjust="spacingAndGlyphs" font-size="${size}" fill="${fill}" font-family="${fam || 'DejaVu Sans Condensed'}, DejaVu Sans, sans-serif" xml:space="preserve">${str}</text>`;
s += text(208, 134, 194, 'Advanced Grid_TP/ Working Successfully', 9, '#c01414', 'DejaVu Sans');
s += text(192, 125.5, 194, 'GBPUSD,M15  1.34836 1.34898 1.34826 1.34871', 9.5, '#f2f2f2');
s += text(192, 138, 90, 'Activated And Working', 9.5, '#f2f2f2');
s += text(282, 234.5, 267, 'AccBalance: 6207.82', 26, '#fafafa', 'DejaVu Sans');
s += text(569, 234.5, 190, 'AccountEquity:', 26, '#fafafa', 'DejaVu Sans');
s += text(778, 234.5, 105, '6207.82', 26, '#fafafa', 'DejaVu Sans');
['16 May 2018', '16 May 15:15', '16 May 17:15', '16 May 19:15', '16 May 21:15', '16 May 23:15', '17 May 01:15', '17 May 03:15', '17 May 05:15', '17 May 07:15', '17 May 09:15', '17 May 11:15', '17 May 13:15', '17 May 15:15'].forEach((d, i) => {
  const x = 188.5 + i * 60;
  s += `<path d="M${x} 410v3" stroke="#ccc"/>` + text(x - 1, 423, i ? 54.5 : 51.5, d, 9.5, '#e4e4e4');
});
[1.357, 1.3557, 1.3544, 1.3531, 1.3518, 1.3505, 1.3492, 1.3479, 1.3466, 1.3453].forEach((p, i) => {
  const y = 128 + i * 31.4;
  s += `<path d="M1241 ${Math.round(y)}.5h3" stroke="#ccc"/>` + text(1247, y + 3.5, 31, p.toFixed(5), 9.5, '#dcdcdc');
});
s += '<path d="M1243 323h36v10h-36z" fill="#fff"/>' + text(1247, 332, 30.5, '1.34871', 9.5, '#111');
s += '<path d="M432 348v15l3.500-3.200 2.500 5.700 2.300-1-2.500-5.500h5z" fill="#fff"/>';
document.getElementById('chart').innerHTML = s;

// Blurred block over the account name in the title bar
const rows = [
  'b4 c0 c0 bc c4 c8 bc c8 c0 b4 c0 cc b0 b4 c0 b8',
  'e0 e4 e6 e2 e6 e8 e4 e2 e8 e6 e2 e6 e4 e2 e0 f4',
  'dc d4 d0 dc cc d4 dc cc dc d6 cc dc d0 dc d4 f0'];
document.getElementById('mosaic').innerHTML = rows.join(' ').split(' ').map(c => `<i style="background:#${c + c + c}"></i>`).join('');

let n = '';
for (let k = 0; k < 8; k++) n += `<path d="M${k * 2.8 + 1} 1v${9 - k}" stroke="#7a9a28" stroke-width="1.800"/><path d="M${k * 2.8 + 1} ${11 - k}v12" stroke="#15506a" stroke-width="1.800"/>`;
document.getElementById('net').innerHTML = n;
```
